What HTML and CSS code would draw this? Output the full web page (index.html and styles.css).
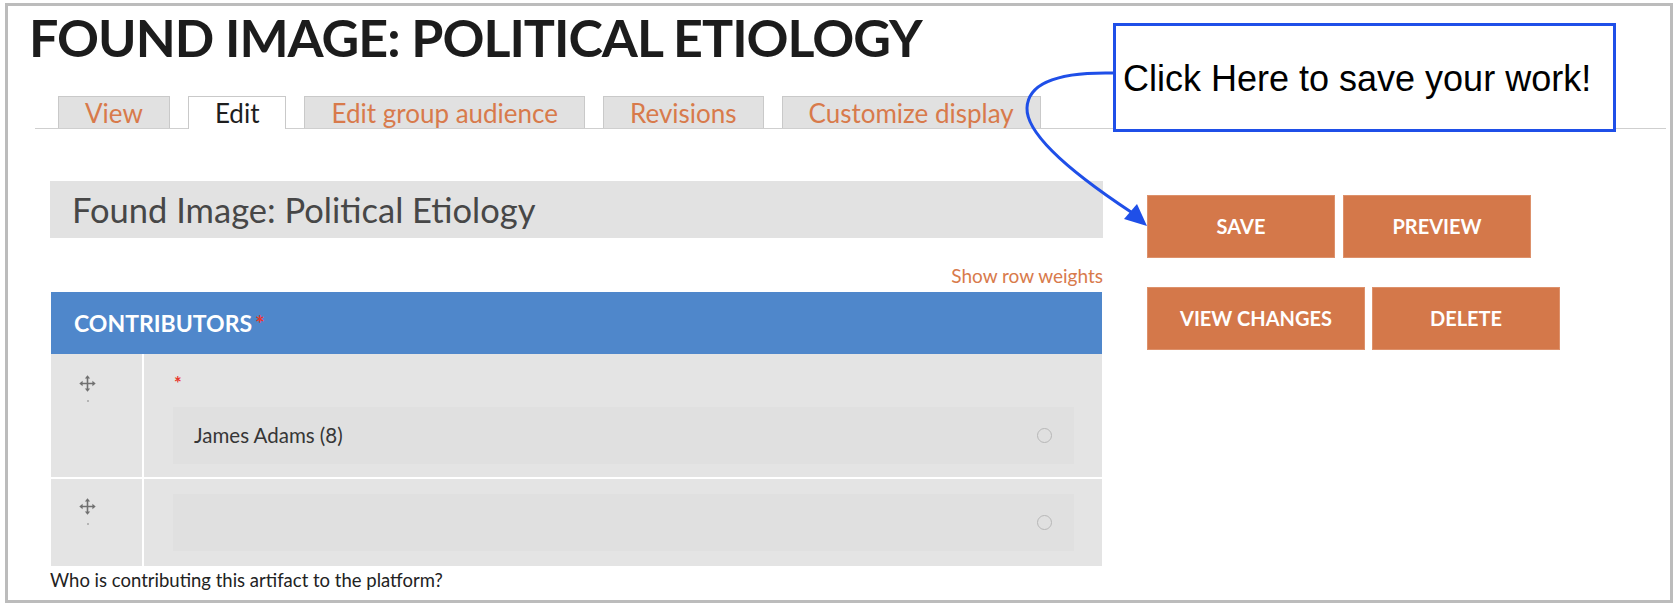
FILE: index.html
```html
<!DOCTYPE html>
<html lang="en">
<head>
<meta charset="utf-8">
<title>Found Image: Political Etiology</title>
<link rel="stylesheet" href="styles.css">
</head>
<body>
<div class="frame">
  <h1 class="page-title">FOUND IMAGE: POLITICAL ETIOLOGY</h1>
  <ul class="tabs">
    <li class="tab"><a>View</a></li>
    <li class="tab active"><a>Edit</a></li>
    <li class="tab"><a>Edit group audience</a></li>
    <li class="tab"><a>Revisions</a></li>
    <li class="tab"><a>Customize display</a></li>
  </ul>
  <div class="content">
    <div class="main-col">
      <div class="title-field">Found Image: Political Etiology</div>
      <div class="row-weights"><a>Show row weights</a></div>
      <div class="field-table">
        <div class="field-head">CONTRIBUTORS<span class="req">*</span></div>
        <div class="field-row first">
          <div class="handle-cell">
            <svg class="handle" viewBox="0 0 16 16" width="17" height="17">
              <path d="M8 2.5V13.5M2.5 8H13.5" stroke="#707070" stroke-width="1.5" fill="none"/>
              <path d="M8 0.3L10.5 3.4H5.5Z M8 15.7L10.5 12.6H5.5Z M0.3 8L3.4 5.5V10.5Z M15.7 8L12.6 5.5V10.5Z" fill="#707070"/>
            </svg>
            <span class="dot"></span>
          </div>
          <div class="input-cell">
            <div class="label"><span class="req">*</span></div>
            <div class="input"><span class="value">James Adams (8)</span><span class="throbber"></span></div>
          </div>
        </div>
        <div class="field-row second">
          <div class="handle-cell">
            <svg class="handle" viewBox="0 0 16 16" width="17" height="17">
              <path d="M8 2.5V13.5M2.5 8H13.5" stroke="#707070" stroke-width="1.5" fill="none"/>
              <path d="M8 0.3L10.5 3.4H5.5Z M8 15.7L10.5 12.6H5.5Z M0.3 8L3.4 5.5V10.5Z M15.7 8L12.6 5.5V10.5Z" fill="#707070"/>
            </svg>
            <span class="dot"></span>
          </div>
          <div class="input-cell">
            <div class="input"><span class="value"></span><span class="throbber"></span></div>
          </div>
        </div>
      </div>
      <div class="description">Who is contributing this artifact to the platform?</div>
    </div>
    <div class="actions">
      <div class="btn-row">
        <button class="btn">SAVE</button>
        <button class="btn">PREVIEW</button>
      </div>
      <div class="btn-row tight">
        <button class="btn">VIEW CHANGES</button>
        <button class="btn">DELETE</button>
      </div>
    </div>
  </div>
</div>
<div class="callout">Click Here to save your work!</div>
<svg class="arrow" viewBox="0 0 1678 606" width="1678" height="606">
  <path d="M1113,73 C1065,72 1028,80 1027,108 C1026,135 1075,175 1131,212" stroke="#1f4fe8" stroke-width="3" fill="none"/>
  <polygon points="1147,226 1124,219 1137,204" fill="#1f4fe8"/>
</svg>
</body>
</html>
```

FILE: styles.css
```css
* { box-sizing: border-box; }
html, body { margin: 0; padding: 0; }
body {
  position: relative;
  width: 1678px;
  height: 606px;
  background: #ffffff;
  font-family: Lato, "Liberation Sans", sans-serif;
  color: #222;
  overflow: hidden;
}
.frame {
  margin: 3px 0 0 5px;
  width: 1668px;
  height: 600px;
  border: 3px solid #bcbcbc;
  background: #fff;
}
.page-title {
  margin: 5px 0 0 21px;
  font-size: 52px;
  line-height: 52px;
  font-weight: 700;
  letter-spacing: -1px;
  color: #1c1c1c;
  white-space: nowrap;
}
.tabs {
  list-style: none;
  margin: 33px 4px 0 27px;
  padding: 0 0 0 23px;
  display: flex;
  gap: 18px;
  border-bottom: 1px solid #cfcfcf;
  height: 33px;
}
.tab {
  height: 32px;
  padding: 0 26px;
  background: #e1e1e1;
  border: 1px solid #c9c9c9;
  border-bottom: none;
  font-size: 26px;
  line-height: 32px;
  color: #d87a4b;
  white-space: nowrap;
}
.tab.active {
  background: #fff;
  color: #1e1e1e;
  height: 33px;
}
.content {
  display: flex;
  margin: 52px 0 0 42px;
  gap: 44px;
}
.main-col { width: 1053px; }
.title-field {
  height: 57px;
  background: #e2e2e2;
  padding-left: 22px;
  font-size: 34.5px;
  line-height: 57px;
  color: #474747;
}
.row-weights {
  padding: 28px 0 7px;
  text-align: right;
  font-size: 19px;
  line-height: 19px;
  color: #d87a4b;
}
.field-table { margin: 0 1px; }
.field-head {
  height: 62px;
  background: #4f87cb;
  color: #fff;
  font-weight: 700;
  font-size: 23px;
  line-height: 62px;
  padding-left: 23px;
}
.req { color: #e8362d; font-weight: 700; }
.field-head .req { margin-left: 3px; }
.field-row {
  display: grid;
  grid-template-columns: 91px 1fr;
  column-gap: 2px;
}
.field-row.second { margin-top: 2px; }
.handle-cell, .input-cell { background: #e4e4e4; }
.handle-cell {
  display: flex;
  flex-direction: column;
  align-items: flex-start;
  padding-left: 28px;
}
.field-row.first .handle-cell { padding-top: 21px; }
.field-row.second .handle-cell { padding-top: 19px; }
.handle { display: block; }
.dot {
  display: block;
  width: 2px;
  height: 2px;
  background: #b5b5b5;
  margin: 8px 0 0 8px;
}
.input-cell { padding: 0 28px 0 29px; }
.field-row.first .input-cell { padding-top: 17px; padding-bottom: 13px; }
.field-row.second .input-cell { padding-top: 15px; padding-bottom: 15px; }
.label {
  height: 24px;
  line-height: 24px;
  font-size: 18px;
  margin-bottom: 12px;
  padding-left: 1px;
}
.input {
  height: 57px;
  background: #e0e0e0;
  display: flex;
  align-items: center;
  justify-content: space-between;
  padding: 0 22px 0 21px;
}
.value {
  font-size: 20.5px;
  line-height: 57px;
  color: #363636;
}
.throbber {
  width: 15px;
  height: 15px;
  border: 1.5px solid #b7b7b7;
  border-radius: 50%;
}
.description {
  margin-top: 4px;
  font-size: 18.5px;
  line-height: 20px;
  color: #222;
}
.actions {
  margin-top: 14px;
  display: flex;
  flex-direction: column;
  gap: 29px;
}
.btn-row { display: flex; gap: 8px; }
.btn-row.tight { gap: 7px; }
.btn {
  min-width: 188px;
  height: 63px;
  padding: 0 33px;
  background: #d4784a;
  border: 1px solid #dd916b;
  color: #fff;
  font-family: Lato, "Liberation Sans", sans-serif;
  font-weight: 700;
  font-size: 20px;
  line-height: 61px;
  text-align: center;
}
.btn-row.tight .btn:first-child { padding: 0 32px; }
.callout {
  position: absolute;
  left: 1113px;
  top: 23px;
  width: 503px;
  height: 109px;
  border: 3px solid #1f4fe8;
  background: #fff;
  padding: 35px 0 0 7px;
  font-family: "Liberation Sans", Arial, sans-serif;
  font-size: 36px;
  line-height: 36px;
  color: #000;
  white-space: nowrap;
}
.arrow {
  position: absolute;
  left: 0;
  top: 0;
  pointer-events: none;
}
```
